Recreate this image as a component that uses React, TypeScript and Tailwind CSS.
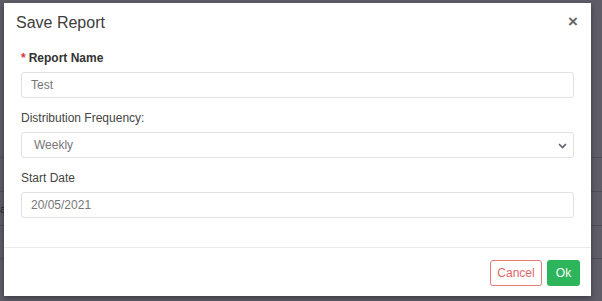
import React from "react";

export default function App() {
  const font = { fontFamily: '"Liberation Sans", Arial, sans-serif' };
  return (
    <div
      className="relative w-[602px] h-[301px] overflow-hidden bg-[#5f5d68] pt-[3px] pl-[4px]"
      style={font}
    >
      {/* faint background table rows */}
      <div className="absolute left-0 right-0 top-[157px] h-px bg-[#4f4d58]" />
      <div className="absolute left-0 right-0 top-[191px] h-px bg-[#4f4d58]" />
      <div className="absolute left-0 right-0 top-[225px] h-px bg-[#4f4d58]" />
      <div className="absolute left-0 right-0 top-[258px] h-px bg-[#4f4d58]" />
      <span className="absolute left-0 top-[201px] text-[11px] text-[#2a2a30]">a</span>

      <div className="relative w-[587px] h-[293px] bg-white shadow-[0_2px_6px_rgba(0,0,0,0.4)] flex flex-col">
        {/* header */}
        <div className="flex items-start justify-between h-[37px] pl-[12px] pr-[13px] pt-[10px]">
          <h2 className="text-[16px] leading-[20px] text-[#3d3d3d]">Save Report</h2>
          <span className="text-[17px] leading-[20px] font-bold text-[#666] mt-[-1px]">×</span>
        </div>

        {/* body */}
        <div className="px-[17px] pt-[9px] pb-[18px]">
          <div className="mb-[11px]">
            <label className="block h-[18px] leading-[18px] text-[12px] font-bold text-[#333] mb-[5px]">
              <span className="text-[#dc3545] mr-[3px]">*</span>Report Name
            </label>
            <div className="h-[26px] border border-[#dee2e6] rounded-[3px] pl-[9px] flex items-center text-[12px] text-[#777]">
              Test
            </div>
          </div>
          <div className="mb-[11px]">
            <label className="block h-[18px] leading-[18px] text-[12px] text-[#444] mb-[5px]">
              Distribution Frequency:
            </label>
            <div className="h-[26px] border border-[#dee2e6] rounded-[3px] pl-[12px] pr-[6px] flex items-center justify-between text-[12px] text-[#777]">
              <span>Weekly</span>
              <svg width="9" height="6" viewBox="0 0 9 6" className="mt-[1px]">
                <path d="M1 1 L4.5 4.5 L8 1" fill="none" stroke="#5a6270" strokeWidth="1.6" />
              </svg>
            </div>
          </div>
          <div className="mb-[11px]">
            <label className="block h-[18px] leading-[18px] text-[12px] text-[#444] mb-[5px]">
              Start Date
            </label>
            <div className="h-[26px] border border-[#dee2e6] rounded-[3px] pl-[9px] flex items-center text-[12px] text-[#777]">
              20/05/2021
            </div>
          </div>
        </div>

        {/* footer */}
        <div className="border-t border-[#e9ecef] flex justify-end gap-[5px] pt-[12px] pr-[11px]">
          <button className="h-[26px] w-[52px] border border-[#e87b7b] rounded-[3px] text-[12px] text-[#e06767] bg-white">
            Cancel
          </button>
          <button className="h-[26px] w-[33px] rounded-[3px] text-[12px] text-white bg-[#2cb55a]">
            Ok
          </button>
        </div>
      </div>
    </div>
  );
}
